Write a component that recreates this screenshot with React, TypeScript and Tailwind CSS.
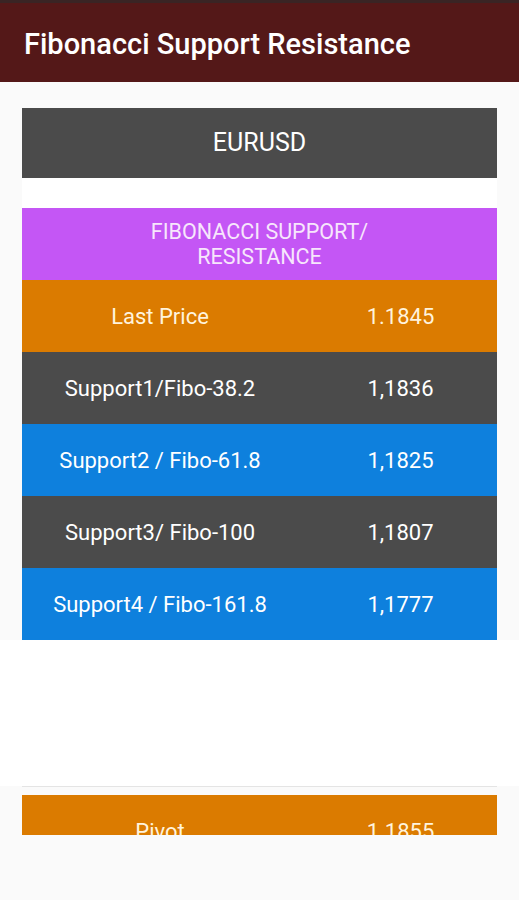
import React from "react";

type Row = { label: string; value: string; bg: string; text: string };

const rows: Row[] = [
  { label: "Last Price", value: "1.1845", bg: "bg-[#db7b00]", text: "text-[#fff3dd]" },
  { label: "Support1/Fibo-38.2", value: "1,1836", bg: "bg-[#4b4b4b]", text: "text-white" },
  { label: "Support2 / Fibo-61.8", value: "1,1825", bg: "bg-[#0e80dd]", text: "text-white" },
  { label: "Support3/ Fibo-100", value: "1,1807", bg: "bg-[#4b4b4b]", text: "text-white" },
  { label: "Support4 / Fibo-161.8", value: "1,1777", bg: "bg-[#0e80dd]", text: "text-white" },
];

function PriceRow({ row }: { row: Row }) {
  return (
    <div className={`flex h-[72px] shrink-0 items-center text-[22px] ${row.bg} ${row.text}`}>
      <div className="w-[276px] text-center">{row.label}</div>
      <div className="flex-1 pl-[6px] text-center">{row.value}</div>
    </div>
  );
}

export default function App() {
  return (
    <div
      className="flex h-[900px] w-[519px] flex-col overflow-hidden bg-[#fafafa]"
      style={{ fontFamily: "Roboto, 'Noto Sans', sans-serif" }}
    >
      <header className="flex h-[82px] shrink-0 items-center border-t-[3px] border-[#3a2424] bg-[#541818] pl-[24px] pt-[4px]">
        <h1 className="text-[29px] font-medium leading-none text-white">
          Fibonacci Support Resistance
        </h1>
      </header>

      <div className="px-[22px] pt-[26px]">
        <div className="flex h-[70px] items-center justify-center bg-[#4b4b4b] text-[25px] text-white">
          EURUSD
        </div>
        <div className="h-[30px] bg-white" />
        <div className="flex h-[72px] flex-col items-center justify-center bg-[#c456f5] text-[21.5px] leading-[25px] text-[#f7e6fc]">
          <span>FIBONACCI SUPPORT/</span>
          <span>RESISTANCE</span>
        </div>
        {rows.map((r) => (
          <PriceRow key={r.label} row={r} />
        ))}
      </div>

      <div className="h-[146px] shrink-0 bg-white" />

      <div className="px-[22px]">
        <div className="h-px bg-[#e4e4e4]" />
        <div className="mt-[8px] h-[40px] overflow-hidden">
          <PriceRow
            row={{ label: "Pivot", value: "1.1855", bg: "bg-[#db7b00]", text: "text-[#fff3dd]" }}
          />
        </div>
      </div>
    </div>
  );
}
